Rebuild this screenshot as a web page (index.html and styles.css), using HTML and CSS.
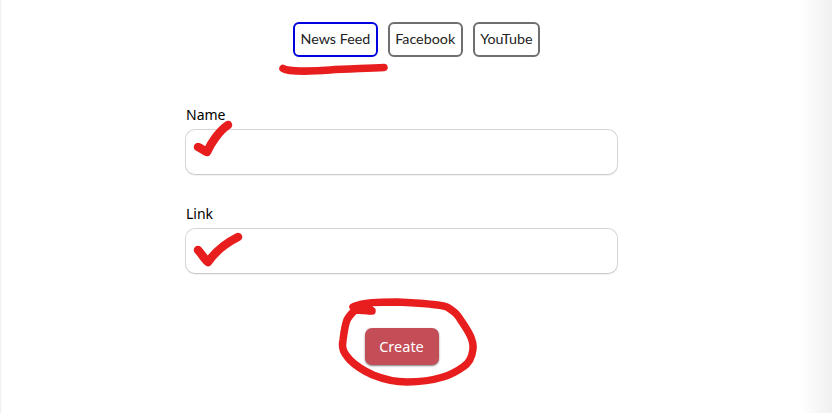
FILE: index.html
```html
<!DOCTYPE html>
<html lang="en">
<head>
<meta charset="utf-8">
<title>Create link</title>
<link rel="stylesheet" href="styles.css">
</head>
<body>
<main class="page">
  <nav class="tabs">
    <button class="tab tab-active">News Feed</button>
    <button class="tab">Facebook</button>
    <button class="tab">YouTube</button>
  </nav>
  <form class="form">
    <div class="field">
      <label class="label">Name</label>
      <div class="input"></div>
    </div>
    <div class="field">
      <label class="label">Link</label>
      <div class="input"></div>
    </div>
    <div class="actions">
      <button class="create" type="button">Create</button>
    </div>
  </form>
</main>
<svg class="marks" width="832" height="413" viewBox="0 0 832 413" fill="none" stroke="#e81e1e" stroke-linecap="round" stroke-linejoin="round">
  <path stroke-width="7.500" d="M283 68.500C288 71.500 310 71.500 330 70C345 69 365 68.500 384 67.500"/>
  <path stroke-width="8.500" d="M198 147C201 148 204 151 207 152C211 143 219 131 228 125"/>
  <path stroke-width="8.500" d="M198 250C201 253 205 260 208 262C215 252 226 243 238 237"/>
  <path stroke-width="7.500" d="M353 307C362 302 380 302 397 302C420 303 438 304 447 307C452 310 455 312 458 316C466 328 474 338 473 349C472 358 468 364 463 367C456 372 450 375 443 377C430 381 418 382 407 382C393 382 383 379 373 375C364 371 356 366 350 360C345 354 341 350 343 340C344 332 345 325 347 320C349 316 352 313 355 310L372 311"/>
  <path stroke-width="9" d="M355 307L370 310"/>
</svg>
</body>
</html>
```

FILE: styles.css
```css
* { box-sizing: border-box; }
html, body { margin: 0; height: 100%; }
body {
  background: linear-gradient(to right, #ececec 0, #fff 2px, #fff 800px, #f0f0f0 832px);
  font-family: "Noto Sans", "Open Sans", sans-serif;
  overflow: hidden;
}
.page {
  width: 803px;
  padding-top: 22px;
  display: flex;
  flex-direction: column;
  align-items: center;
}
.tabs { display: flex; gap: 10px; margin-left: 30px; }
.tab {
  height: 35px;
  padding: 0 5.500px 2px;
  border: 2px solid #6f6f6f;
  border-radius: 6px;
  background: #fff;
  color: #222;
  font: 14.300px Lato, sans-serif;
}
.tab-active { border-color: #0000e0; }
.form { width: 433px; margin-top: 49px; }
.field { margin-bottom: 30px; }
.field + .field { margin-bottom: 0; }
.label {
  display: block;
  height: 23px;
  padding-left: 1px;
  color: #000;
  font-size: 14px;
  line-height: 18px;
}
.input {
  height: 46px;
  border: 1px solid #d6d6d6;
  border-bottom-color: #cccccc;
  border-radius: 10px;
  background: #fff;
  box-shadow: 0 1px 1px rgba(0,0,0,.06);
}
.actions { display: flex; justify-content: center; margin-top: 54px; }
.create {
  width: 74px;
  height: 37px;
  padding: 0 0 2px;
  border: 0;
  border-radius: 7px;
  background: #c44e58;
  color: #fff;
  font: 14.500px "Noto Sans", sans-serif;
  box-shadow: 0 1px 2px rgba(0,0,0,.5);
}
.marks { position: absolute; left: 0; top: 0; pointer-events: none; }
```
